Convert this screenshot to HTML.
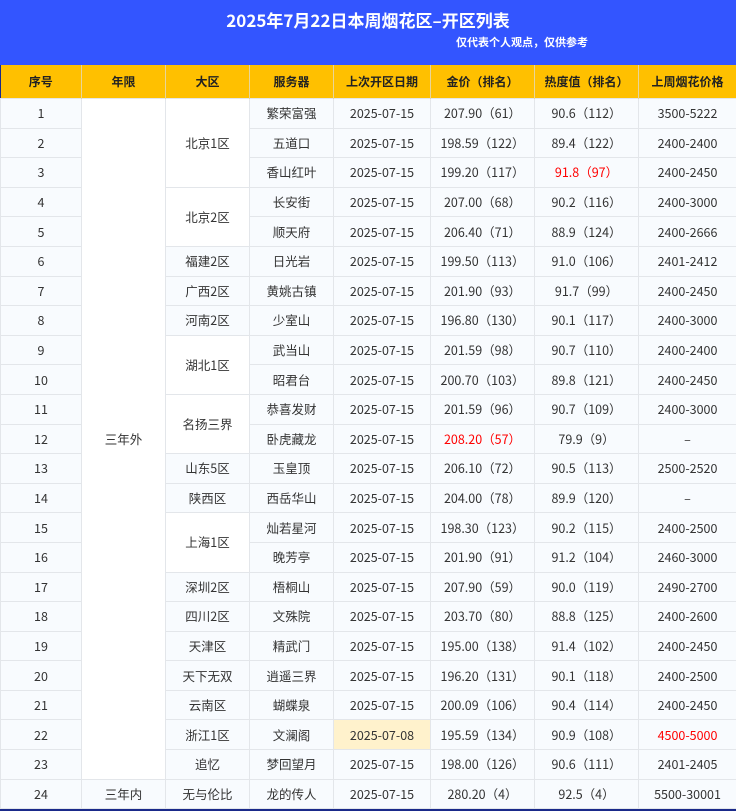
<!DOCTYPE html><html><head><meta charset="utf-8"><style>
body{margin:0;width:736px;height:811px;overflow:hidden;background:#1a2a8a;font-family:"Noto Sans CJK SC",sans-serif}
.hd{height:65px;background:#3355ff;color:#fff;position:relative}
.hd h1{margin:0;position:absolute;top:7px;left:0;width:736px;text-align:center;font-size:17px;font-weight:bold;line-height:26px}
.hd .s{position:absolute;top:34px;left:456px;font-size:11px;font-weight:bold;line-height:16px}
table{border-collapse:collapse;table-layout:fixed;width:736px;font-size:12.5px;color:#333}
th{background:#ffc000;height:33px;font-weight:bold;font-size:12px;color:#222;border-right:1px solid #e8d59a;padding:0;line-height:16px}
td{height:28.6px;padding:0;text-align:center;vertical-align:middle;line-height:16px;border:1px solid #e3e6ea;background:#f8fbfe;white-space:nowrap}
td.m{background:#fff}
.r{color:#f00}.y{background:#fff2cc}
</style></head><body>
<div class="hd"><h1>2025年7月22日本周烟花区–开区列表</h1><div class="s">仅代表个人观点，仅供参考</div></div>
<table>
<colgroup><col style="width:81px"><col style="width:84px"><col style="width:84px"><col style="width:84px"><col style="width:97px"><col style="width:104px"><col style="width:104px"><col style="width:98px"></colgroup>
<tr><th>序号</th><th>年限</th><th>大区</th><th>服务器</th><th>上次开区日期</th><th>金价（排名）</th><th>热度值（排名）</th><th>上周烟花价格</th></tr>
<tr><td>1</td><td class="m" rowspan="23">三年外</td><td class="m" rowspan="3">北京1区</td><td>繁荣富强</td><td>2025-07-15</td><td>207.90（61）</td><td>90.6（112）</td><td>3500-5222</td></tr>
<tr><td>2</td><td>五道口</td><td>2025-07-15</td><td>198.59（122）</td><td>89.4（122）</td><td>2400-2400</td></tr>
<tr><td>3</td><td>香山红叶</td><td>2025-07-15</td><td>199.20（117）</td><td class="r">91.8（97）</td><td>2400-2450</td></tr>
<tr><td>4</td><td class="m" rowspan="2">北京2区</td><td>长安街</td><td>2025-07-15</td><td>207.00（68）</td><td>90.2（116）</td><td>2400-3000</td></tr>
<tr><td>5</td><td>顺天府</td><td>2025-07-15</td><td>206.40（71）</td><td>88.9（124）</td><td>2400-2666</td></tr>
<tr><td>6</td><td>福建2区</td><td>日光岩</td><td>2025-07-15</td><td>199.50（113）</td><td>91.0（106）</td><td>2401-2412</td></tr>
<tr><td>7</td><td>广西2区</td><td>黄姚古镇</td><td>2025-07-15</td><td>201.90（93）</td><td>91.7（99）</td><td>2400-2450</td></tr>
<tr><td>8</td><td>河南2区</td><td>少室山</td><td>2025-07-15</td><td>196.80（130）</td><td>90.1（117）</td><td>2400-3000</td></tr>
<tr><td>9</td><td class="m" rowspan="2">湖北1区</td><td>武当山</td><td>2025-07-15</td><td>201.59（98）</td><td>90.7（110）</td><td>2400-2400</td></tr>
<tr><td>10</td><td>昭君台</td><td>2025-07-15</td><td>200.70（103）</td><td>89.8（121）</td><td>2400-2450</td></tr>
<tr><td>11</td><td class="m" rowspan="2">名扬三界</td><td>恭喜发财</td><td>2025-07-15</td><td>201.59（96）</td><td>90.7（109）</td><td>2400-3000</td></tr>
<tr><td>12</td><td>卧虎藏龙</td><td>2025-07-15</td><td class="r">208.20（57）</td><td>79.9（9）</td><td>–</td></tr>
<tr><td>13</td><td>山东5区</td><td>玉皇顶</td><td>2025-07-15</td><td>206.10（72）</td><td>90.5（113）</td><td>2500-2520</td></tr>
<tr><td>14</td><td>陕西区</td><td>西岳华山</td><td>2025-07-15</td><td>204.00（78）</td><td>89.9（120）</td><td>–</td></tr>
<tr><td>15</td><td class="m" rowspan="2">上海1区</td><td>灿若星河</td><td>2025-07-15</td><td>198.30（123）</td><td>90.2（115）</td><td>2400-2500</td></tr>
<tr><td>16</td><td>晚芳亭</td><td>2025-07-15</td><td>201.90（91）</td><td>91.2（104）</td><td>2460-3000</td></tr>
<tr><td>17</td><td>深圳2区</td><td>梧桐山</td><td>2025-07-15</td><td>207.90（59）</td><td>90.0（119）</td><td>2490-2700</td></tr>
<tr><td>18</td><td>四川2区</td><td>文殊院</td><td>2025-07-15</td><td>203.70（80）</td><td>88.8（125）</td><td>2400-2600</td></tr>
<tr><td>19</td><td>天津区</td><td>精武门</td><td>2025-07-15</td><td>195.00（138）</td><td>91.4（102）</td><td>2400-2450</td></tr>
<tr><td>20</td><td>天下无双</td><td>逍遥三界</td><td>2025-07-15</td><td>196.20（131）</td><td>90.1（118）</td><td>2400-2500</td></tr>
<tr><td>21</td><td>云南区</td><td>蝴蝶泉</td><td>2025-07-15</td><td>200.09（106）</td><td>90.4（114）</td><td>2400-2450</td></tr>
<tr><td>22</td><td>浙江1区</td><td>文澜阁</td><td class="y">2025-07-08</td><td>195.59（134）</td><td>90.9（108）</td><td class="r">4500-5000</td></tr>
<tr><td>23</td><td>追忆</td><td>梦回望月</td><td>2025-07-15</td><td>198.00（126）</td><td>90.6（111）</td><td>2401-2405</td></tr>
<tr><td>24</td><td>三年内</td><td>无与伦比</td><td>龙的传人</td><td>2025-07-15</td><td>280.20（4）</td><td>92.5（4）</td><td>5500-30001</td></tr>
</table>
</body></html>
